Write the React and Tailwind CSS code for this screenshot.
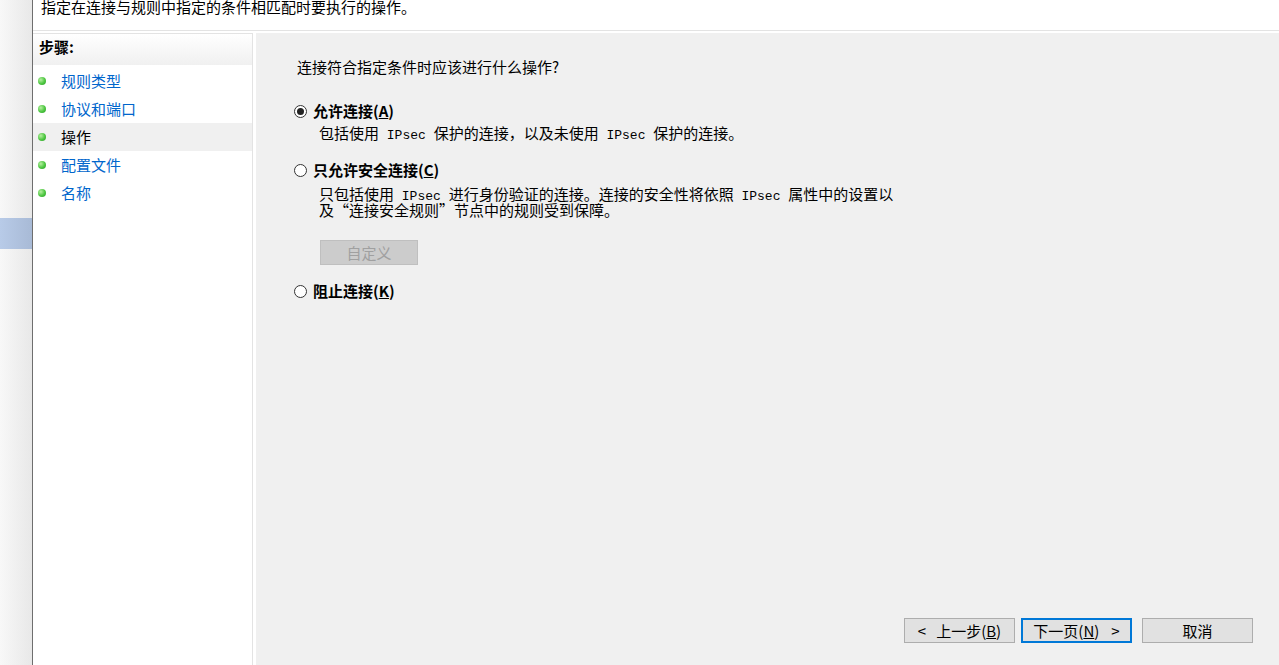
import React from "react";

const F = { fontFamily: '"Noto Sans CJK SC", "Liberation Sans", sans-serif' };

function Lat({ children }) {
  return <span className="font-['Liberation_Mono'] text-[13px] leading-[15px]">{children}</span>;
}

function Radio({ checked }) {
  return (
    <span className="w-[13px] h-[13px] rounded-full border border-[#333333] bg-white flex items-center justify-center shrink-0">
      {checked && <span className="w-[7px] h-[7px] rounded-full bg-[#222222]" />}
    </span>
  );
}

function Bullet() {
  return (
    <span className="w-[8px] h-[8px] rounded-full shrink-0 bg-[radial-gradient(circle_at_35%_35%,#b6f0a0_0%,#4cc640_55%,#2e9a2a_100%)]" />
  );
}

function Step({ label, active }) {
  return (
    <div className={`h-[28px] flex items-center pl-[5px] ${active ? "bg-[#f0f0f0]" : ""}`}>
      <Bullet />
      <span className={`ml-[15px] text-[15px] leading-[20px] ${active ? "text-black" : "text-[#0066cc]"}`}>{label}</span>
    </div>
  );
}

function Btn({ children, primary }) {
  return (
    <div
      className={`h-[25px] w-[111px] flex items-center justify-center text-[15px] leading-[20px] text-black bg-[#e1e1e1] ${
        primary ? "border-2 border-[#0078d7]" : "border border-[#adadad]"
      }`}
    >
      {children}
    </div>
  );
}

export default function App() {
  return (
    <div className="w-[1279px] h-[665px] flex overflow-hidden bg-white text-black" style={F}>
      <div className="w-[32px] flex flex-col bg-gradient-to-r from-[#f8f8f8] to-[#e8e8e8]">
        <div className="h-[218px]" />
        <div className="h-[31px] bg-gradient-to-r from-[#b8cbe8] to-[#a8bad6]" />
      </div>
      <div className="w-[1px] bg-[#6e6e6e]" />
      <div className="flex-1 flex flex-col min-w-0">
        <div className="h-[31px] border-b border-[#e3e3e3] pl-[8px] shrink-0">
          <div className="text-[15px] leading-[15px] mt-[-1px] whitespace-nowrap">
            指定在连接与规则中指定的条件相匹配时要执行的操作。
          </div>
        </div>
        <div className="h-[2px] shrink-0" />
        <div className="flex-1 flex min-h-0">
          <div className="w-[220px] border-r border-t border-[#e3e3e3] flex flex-col shrink-0">
            <div className="h-[31px] pl-[6px] pb-[5px] flex items-center bg-gradient-to-b from-white to-[#f0f0f0] font-bold text-[15px] leading-[20px]">
              步骤:
            </div>
            <div className="h-[2px]" />
            <Step label="规则类型" />
            <Step label="协议和端口" />
            <Step label="操作" active />
            <Step label="配置文件" />
            <Step label="名称" />
          </div>
          <div className="w-[3px] shrink-0" />
          <div className="flex-1 bg-[#f0f0f0] flex flex-col">
            <div className="pl-[41px] mt-[24px] h-[20px] text-[15px] leading-[20px]">
              连接符合指定条件时应该进行什么操作?
            </div>
            <div className="pl-[38px] mt-[24px] h-[20px] flex items-center">
              <Radio checked />
              <span className="ml-[6px] font-bold text-[15px] leading-[20px]">
                允许连接(<span className="underline">A</span>)
              </span>
            </div>
            <div className="pl-[63px] mt-[2px] h-[20px] flex items-center text-[15px] leading-[20px] whitespace-nowrap">
              <span>
                包括使用<Lat> IPsec </Lat>保护的连接，以及未使用<Lat> IPsec </Lat>保护的连接。
              </span>
            </div>
            <div className="pl-[38px] mt-[17px] h-[20px] flex items-center">
              <Radio />
              <span className="ml-[6px] font-bold text-[15px] leading-[20px]">
                只允许安全连接(<span className="underline">C</span>)
              </span>
            </div>
            <div className="pl-[63px] mt-[7px] text-[15px] leading-[15px] flex flex-col">
              <div className="h-[15px] flex items-center whitespace-nowrap">
                <span>
                  只包括使用<Lat> IPsec </Lat>进行身份验证的连接。连接的安全性将依照<Lat> IPsec </Lat>属性中的设置以
                </span>
              </div>
              <div className="h-[15px] flex items-center whitespace-nowrap">
                <span>及“连接安全规则”节点中的规则受到保障。</span>
              </div>
            </div>
            <div className="pl-[64px] mt-[23px]">
              <div className="w-[98px] h-[25px] bg-[#cccccc] border border-[#bfbfbf] text-[#a0a0a0] text-[15px] leading-[20px] flex items-center justify-center">
                自定义
              </div>
            </div>
            <div className="pl-[38px] mt-[16px] h-[20px] flex items-center">
              <Radio />
              <span className="ml-[6px] font-bold text-[15px] leading-[20px]">
                阻止连接(<span className="underline">K</span>)
              </span>
            </div>
            <div className="flex-1" />
            <div className="flex justify-end pr-[26px] mb-[22px]">
              <Btn>
                <span className="mr-[10px]">&lt;</span>上一步(<span className="underline">B</span>)
              </Btn>
              <div className="w-[6px]" />
              <Btn primary>
                下一页(<span className="underline">N</span>)<span className="ml-[12px]">&gt;</span>
              </Btn>
              <div className="w-[10px]" />
              <Btn>取消</Btn>
            </div>
          </div>
        </div>
      </div>
    </div>
  );
}
